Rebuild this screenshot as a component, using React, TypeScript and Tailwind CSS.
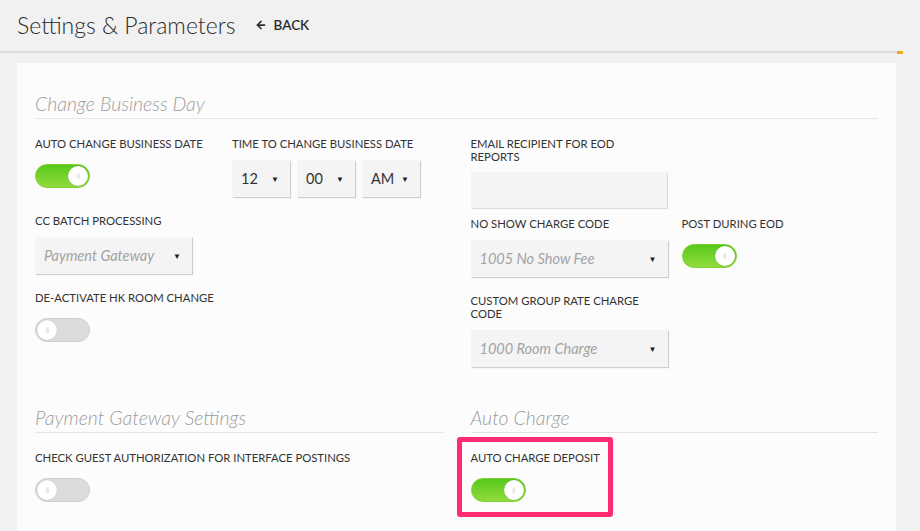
import { ArrowLeft } from 'lucide-react';

function Toggle({ on }: { on: boolean }) {
  return (
    <div
      className={
        on
          ? 'relative w-[55px] h-[24px] rounded-full bg-gradient-to-b from-[#56c91a] to-[#8fdc3c] border border-[#7fcf35]'
          : 'relative w-[55px] h-[24px] rounded-full bg-[#dcdcdc] border border-[#cfcfcf]'
      }
    >
      <div
        className={
          'absolute top-[1px] w-[20px] h-[20px] rounded-full bg-white flex items-center justify-center shadow-[0_0_1px_rgba(0,0,0,0.3)] ' +
          (on ? 'right-[1px]' : 'left-[1px]')
        }
      >
        <span className="text-[6px] leading-none text-[#c8c8c8] tracking-[-0.5px]">|||</span>
      </div>
    </div>
  );
}

function Select({ value, width, placeholder }: { value: string; width: string; placeholder?: boolean }) {
  return (
    <div
      className={`${width} h-[37px] bg-[#f4f4f4] shadow-[1px_1px_1px_rgba(0,0,0,0.18)] flex items-center justify-between pl-[9px] pr-[11px]`}
    >
      <span className={placeholder ? 'text-[14.5px] italic text-[#a3a3a3]' : 'text-[14.5px] text-[#333]'}>{value}</span>
      <span className="text-[8px] text-[#222]">▼</span>
    </div>
  );
}

function Label({ children, className = '' }: { children: React.ReactNode; className?: string }) {
  return <div className={`text-[11.3px] leading-[13px] text-[#333] uppercase ${className}`}>{children}</div>;
}

function Heading({ children }: { children: React.ReactNode }) {
  return (
    <div className="border-b border-[#e4e4e4] pb-[2px]">
      <h2 className="text-[19.5px] leading-[24px] italic font-light text-[#9c9c9c]">{children}</h2>
    </div>
  );
}

export default function App() {
  return (
    <div
      className="w-[920px] h-[531px] overflow-hidden bg-[#f1f1f1]"
      style={{ fontFamily: 'Lato, "Open Sans", sans-serif' }}
    >
      {/* Header */}
      <div className="h-[51px] flex items-center pl-[17px] pb-[1px]">
        <h1 className="text-[23px] font-light text-[#2b2b2b]">Settings &amp; Parameters</h1>
        <button className="ml-[20px] flex items-center gap-[6px] text-[13.5px] font-semibold text-[#2b2b2b]">
          <ArrowLeft size={12} strokeWidth={3.5} /> BACK
        </button>
      </div>
      <div className="w-[903px] h-[2px] bg-[#dedede] flex justify-end">
        <div className="w-[6px] h-[3px] bg-[#f5a623]" />
      </div>

      {/* Card */}
      <div className="ml-[17px] mt-[10px] w-[879px] h-[480px] bg-[#fcfcfc] px-[18px] pt-[29px]">
        {/* Change Business Day */}
        <Heading>Change Business Day</Heading>
        <div className="grid grid-cols-2 gap-x-[28px] pt-[18px]">
          {/* Left */}
          <div>
            <div className="flex">
              <div className="w-[197px]">
                <Label>Auto change business date</Label>
                <div className="mt-[14px]">
                  <Toggle on />
                </div>
              </div>
              <div>
                <Label>Time to change business date</Label>
                <div className="mt-[10px] flex gap-[7px]">
                  <Select value="12" width="w-[58px]" />
                  <Select value="00" width="w-[58px]" />
                  <Select value="AM" width="w-[58px]" />
                </div>
              </div>
            </div>
            <Label className="mt-[17px]">CC Batch processing</Label>
            <div className="mt-[10px]">
              <Select value="Payment Gateway" width="w-[157px]" placeholder />
            </div>
            <Label className="mt-[17px]">De-activate HK room change</Label>
            <div className="mt-[14px]">
              <Toggle on={false} />
            </div>
          </div>

          {/* Right */}
          <div>
            <Label className="w-[180px]">Email recipient for EOD reports</Label>
            <div className="mt-[9px] w-[196px] h-[36px] bg-[#f4f4f4] shadow-[1px_1px_1px_rgba(0,0,0,0.12)]" />
            <div className="flex mt-[9px]">
              <div className="w-[211px]">
                <Label>No show charge code</Label>
                <div className="mt-[10px]">
                  <Select value="1005 No Show Fee" width="w-[197px]" placeholder />
                </div>
              </div>
              <div>
                <Label>Post during EOD</Label>
                <div className="mt-[14px]">
                  <Toggle on />
                </div>
              </div>
            </div>
            <Label className="mt-[17px] w-[185px]">Custom group rate charge code</Label>
            <div className="mt-[10px]">
              <Select value="1000 Room Charge" width="w-[197px]" placeholder />
            </div>
          </div>
        </div>

        {/* Second row of sections */}
        <div className="grid grid-cols-2 gap-x-[28px] mt-[39px]">
          <div>
            <Heading>Payment Gateway Settings</Heading>
            <Label className="mt-[18px]">Check guest authorization for interface postings</Label>
            <div className="mt-[14px]">
              <Toggle on={false} />
            </div>
          </div>
          <div>
            <Heading>Auto Charge</Heading>
            <div className="relative mt-[18px]">
              <Label>Auto charge deposit</Label>
              <div className="mt-[14px]">
                <Toggle on />
              </div>
              <div className="absolute -left-[14px] -top-[14px] w-[156px] h-[80px] border-[5px] border-[#ff2d6f] rounded-[3px]" />
            </div>
          </div>
        </div>
      </div>
    </div>
  );
}
